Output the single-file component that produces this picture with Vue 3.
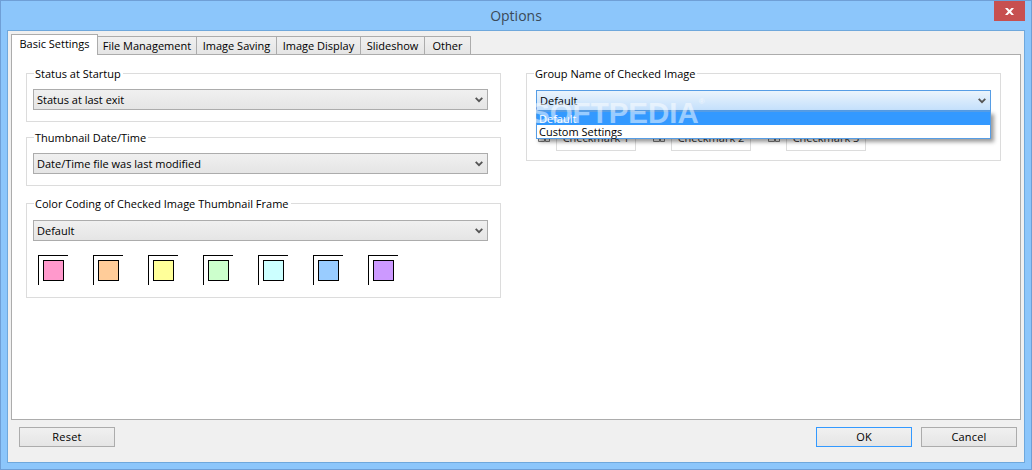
<script setup>
const tabs = [
  { label: 'Basic Settings', width: 87, active: true },
  { label: 'File Management', width: 99 },
  { label: 'Image Saving', width: 80 },
  { label: 'Image Display', width: 84 },
  { label: 'Slideshow', width: 64 },
  { label: 'Other', width: 46 }
]
const swatches = ['#ff99cc', '#ffcc99', '#ffff99', '#ccffcc', '#ccffff', '#99ccff', '#cc99ff']
const checks = ['Checkmark 1', 'Checkmark 2', 'Checkmark 3']
</script>

<template>
  <div class="window">
    <header class="titlebar">
      <span class="title">Options</span>
      <button class="close" aria-label="Close">
        <svg width="9" height="7" viewBox="0 0 9 7"><path d="M0 0h2.500L4.500 2 6.500 0H9L6 3.500 9 7H6.500L4.500 5 2.500 7H0L3 3.500z" fill="#fff"/></svg>
      </button>
    </header>
    <main class="client">
      <nav class="tabs">
        <div v-for="t in tabs" :key="t.label" class="tab" :class="{ active: t.active }" :style="{ width: t.width + 'px' }">{{ t.label }}</div>
      </nav>
      <section class="pane">
        <div class="col">
          <fieldset class="group g1">
            <legend>Status at Startup</legend>
            <div class="select">Status at last exit<svg class="chev" width="8" height="6" viewBox="0 0 8 6"><path d="M.7.8L4 4.200 7.300.8" fill="none" stroke="#555" stroke-width="1.800"/></svg></div>
          </fieldset>
          <fieldset class="group g2">
            <legend>Thumbnail Date/Time</legend>
            <div class="select">Date/Time file was last modified<svg class="chev" width="8" height="6" viewBox="0 0 8 6"><path d="M.7.8L4 4.200 7.300.8" fill="none" stroke="#555" stroke-width="1.800"/></svg></div>
          </fieldset>
          <fieldset class="group g3">
            <legend>Color Coding of Checked Image Thumbnail Frame</legend>
            <div class="select">Default<svg class="chev" width="8" height="6" viewBox="0 0 8 6"><path d="M.7.8L4 4.200 7.300.8" fill="none" stroke="#555" stroke-width="1.800"/></svg></div>
            <div class="swatches">
              <div v-for="c in swatches" :key="c" class="frame"><i class="swatch" :style="{ background: c }"></i></div>
            </div>
          </fieldset>
        </div>
        <div class="col">
          <fieldset class="group g4">
            <legend>Group Name of Checked Image</legend>
            <div class="select open">Default<svg class="chev" width="8" height="6" viewBox="0 0 8 6"><path d="M.7.8L4 4.200 7.300.8" fill="none" stroke="#555" stroke-width="1.800"/></svg></div>
            <div class="checks">
              <div v-for="c in checks" :key="c" class="check">
                <svg class="mini" width="12" height="8" viewBox="0 0 12 8"><path d="M.5.5h6v6h-6zM7.500 3.500h4v3h-4z" fill="#eee" stroke="#777"/></svg>
                <div class="checkbox">{{ c }}</div>
              </div>
            </div>
            <ul class="menu">
              <li class="hl">Default</li>
              <li>Custom Settings</li>
            </ul>
            <div class="mark">SOFTPEDIA<sup>®</sup></div>
          </fieldset>
        </div>
      </section>
      <footer class="actions">
        <button class="btn">Reset</button>
        <span class="spacer"></span>
        <button class="btn primary">OK</button>
        <button class="btn">Cancel</button>
      </footer>
    </main>
  </div>
</template>

<style>
html, body { margin: 0; padding: 0; background: #8cc6fb; }
</style>

<style scoped>
.window {
  width: 1032px; height: 470px; box-sizing: border-box;
  background: #8cc6fb; border: 1px solid #6f9fd6;
  display: flex; flex-direction: column; overflow: hidden;
  font-family: "Open Sans", "Noto Sans", sans-serif; font-size: 11px; color: #000;
}
.titlebar { height: 29px; flex: none; display: flex; justify-content: center; position: relative; }
.title { font-size: 14px; color: #3b4a58; line-height: 29px; }
.close {
  position: absolute; right: 6px; top: 0; width: 31px; height: 20px; padding: 0; border: 0;
  background: #c75050; display: flex; align-items: center; justify-content: center;
}
.client {
  flex: none; height: 433px; box-sizing: border-box; margin: 0 6px;
  border: 1px solid #6fa8dc; background: #f0f0f0; padding: 3px 3px 0;
  display: flex; flex-direction: column;
}
.tabs { display: flex; align-items: flex-end; height: 20px; flex: none; position: relative; z-index: 1; }
.tab {
  height: 18px; box-sizing: border-box; border: 1px solid #acacac; border-left-width: 0; border-bottom: 0;
  background: linear-gradient(#f0f0f0, #e5e5e5); text-align: center; line-height: 18px; white-space: nowrap;
}
.tab.active { height: 21px; margin-bottom: -1px; background: #fff; border-left-width: 1px; line-height: 18px; padding-bottom: 3px; }
.pane {
  width: 1010px; height: 366px; box-sizing: border-box; flex: none;
  border: 1px solid #acacac; background: #fff; padding: 11px 14px 0; display: flex; gap: 25px;
}
.col { width: 475px; display: flex; flex-direction: column; flex: none; }
.group {
  margin: 0; box-sizing: border-box; width: 475px; border: 1px solid #dcdcdc; padding: 0 12px 0 6px;
  position: relative; min-width: 0;
}
legend { margin-left: 1px; padding: 0 2px 0 1px; line-height: 15px; color: #000; }
.g1 { height: 56px; }
.g2 { height: 56px; margin-top: 8px; }
.g3 { height: 102px; margin-top: 10px; }
.g4 { height: 95px; }
.select {
  height: 21px; box-sizing: border-box; border: 1px solid #acacac; margin-top: 8px;
  background: linear-gradient(#f0f0f0, #e5e5e5); padding-left: 3px; line-height: 19px; position: relative; width: 455px;
}
.chev { position: absolute; right: 4px; top: 7px; }
.g3 .select { margin-top: 9px; }
.select.open { border-color: #569de5; background: linear-gradient(#ebf4fc, #c4e0fc); width: 455px; margin: 9px 0 0 3px; padding-left: 3px; }
.swatches { display: flex; gap: 25px; margin: 14px 0 0 5px; }
.frame { width: 30px; height: 30px; box-sizing: border-box; border-left: 1px solid #000; border-top: 1px solid #000; padding: 4px 0 0 4px; }
.swatch { display: block; width: 21px; height: 21px; box-sizing: border-box; border: 1px solid #000; }
.checks { display: flex; gap: 17px; margin: 17px 0 0 5px; }
.check { display: flex; align-items: center; gap: 6px; }
.mini { margin-bottom: 2px; }
.checkbox { width: 80px; height: 23px; box-sizing: border-box; border: 1px solid #dcdcdc; text-align: center; line-height: 18px; color: #333; }
.menu {
  position: absolute; left: 9px; top: 30px; width: 455px; margin: 0; padding: 0; list-style: none; box-sizing: border-box;
  border: 1px solid #569de5; background: #fff; box-shadow: 3px 3px 4px rgba(0, 0, 0, .4); line-height: 13px;
}
.menu li { height: 13px; padding-left: 2px; }
.menu li.hl { background: #3399ff; color: #fff; }
.mark {
  position: absolute; left: 3px; top: 17px; font: bold 29.500px/1 "Liberation Sans", sans-serif; color: rgba(255, 255, 255, .5); white-space: nowrap; pointer-events: none;
}
.mark sup { font-size: 8px; vertical-align: 19px; line-height: 0; }
.actions { display: flex; gap: 9px; padding: 7px 4px 0 8px; align-items: flex-start; }
.spacer { flex: 1; }
.btn {
  width: 96px; height: 20px; padding: 0; border: 1px solid #acacac; background: linear-gradient(#f0f0f0, #e5e5e5);
  font: inherit; letter-spacing: .2px; line-height: 16px; color: #000;
}
.btn.primary { border-color: #3399ff; }
</style>
